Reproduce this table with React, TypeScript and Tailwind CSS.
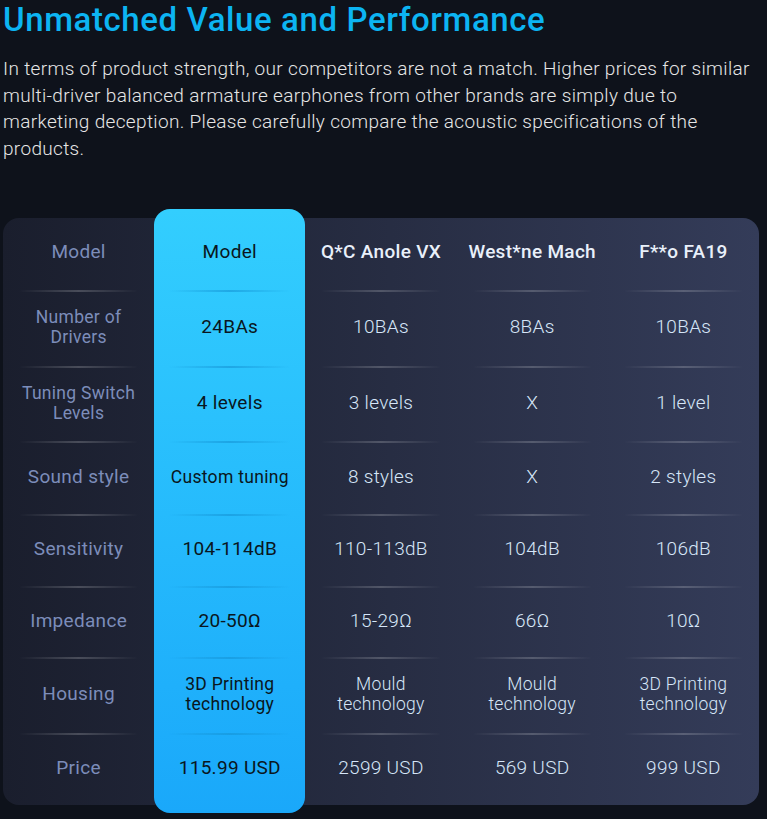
import React from "react";

type Row = { label: string; values: string[]; h: string };

const rows: Row[] = [
  { label: "Model", values: ["Model", "Q*C Anole VX", "West*ne Mach", "F**o FA19"], h: "h-[72px]" },
  { label: "Number of\nDrivers", values: ["24BAs", "10BAs", "8BAs", "10BAs"], h: "h-[74px]" },
  { label: "Tuning Switch\nLevels", values: ["4 levels", "3 levels", "X", "1 level"], h: "h-[73px]" },
  { label: "Sound style", values: ["Custom tuning", "8 styles", "X", "2 styles"], h: "h-[71px]" },
  { label: "Sensitivity", values: ["104-114dB", "110-113dB", "104dB", "106dB"], h: "h-[70px]" },
  { label: "Impedance", values: ["20-50Ω", "15-29Ω", "66Ω", "10Ω"], h: "h-[69px]" },
  {
    label: "Housing",
    values: ["3D Printing\ntechnology", "Mould\ntechnology", "Mould\ntechnology", "3D Printing\ntechnology"],
    h: "h-[74px]",
  },
  { label: "Price", values: ["115.99 USD", "2599 USD", "569 USD", "999 USD"], h: "h-[70px]" },
];

const Cell = ({ text, h, className }: { text: string; h: string; className: string }) => (
  <div className={`${h} flex items-center justify-center pb-[3px] text-center`}>
    <span className={`whitespace-pre-line leading-[20px] tracking-[0.3px] ${className}`}>{text}</span>
  </div>
);

const Divider = ({ dark }: { dark?: boolean }) =>
  dark ? (
    <div className="mx-[15px] h-[2px] bg-linear-to-r from-transparent via-[#1593d4]/60 to-transparent blur-[0.5px]" />
  ) : (
    <div className="mx-[15px] h-[2px] bg-linear-to-r from-transparent via-white/20 to-transparent blur-[0.5px]" />
  );

const Column = ({ col }: { col: number }) => {
  const highlight = col === 1;
  return (
    <div
      className={
        highlight
          ? "-mt-[9px] -mb-[8px] flex flex-col rounded-2xl bg-linear-to-b from-[#33cefe] to-[#1aa8fa] pt-[9px] pb-[8px]"
          : "flex flex-col"
      }
    >
      {rows.map((row, i) => {
        const text = col === 0 ? row.label : row.values[col - 1];
        const small = text.includes("\n") || text === "Custom tuning";
        const size = small ? "text-[17.5px]" : "text-[19px]";
        let cls = `${size} font-light text-[#d6e6f8]`;
        if (col === 0) cls = `${size} text-[#7c8dba]`;
        else if (highlight) cls = `${size} text-[#0a1620]`;
        else if (i === 0) cls = `${size} font-medium text-[#e9f0fa]`;
        return (
          <React.Fragment key={i}>
            <Cell text={text} h={row.h} className={cls} />
            {i < rows.length - 1 && <Divider dark={highlight} />}
          </React.Fragment>
        );
      })}
    </div>
  );
};

export default function App() {
  return (
    <div className="min-h-[819px] bg-[#0e121b] pl-[3px] pr-[8px] font-['Roboto',sans-serif]">
      <h1 className="text-[33px] leading-[39px] font-medium tracking-[0.6px] text-[#0cb4f2]">
        Unmatched Value and Performance
      </h1>
      <p className="mt-[17px] text-[19px] leading-[26.7px] font-light tracking-[0.33px] text-[#e6e6e6]">
        In terms of product strength, our competitors are not a match. Higher prices for similar multi-driver
        balanced armature earphones from other brands are simply due to marketing deception. Please carefully
        compare the acoustic specifications of the products.
      </p>
      <div className="mt-[55px] grid grid-cols-5 rounded-2xl bg-linear-to-r from-[#1a1e2d] to-[#343c59]">
        {[0, 1, 2, 3, 4].map((c) => (
          <Column key={c} col={c} />
        ))}
      </div>
    </div>
  );
}
